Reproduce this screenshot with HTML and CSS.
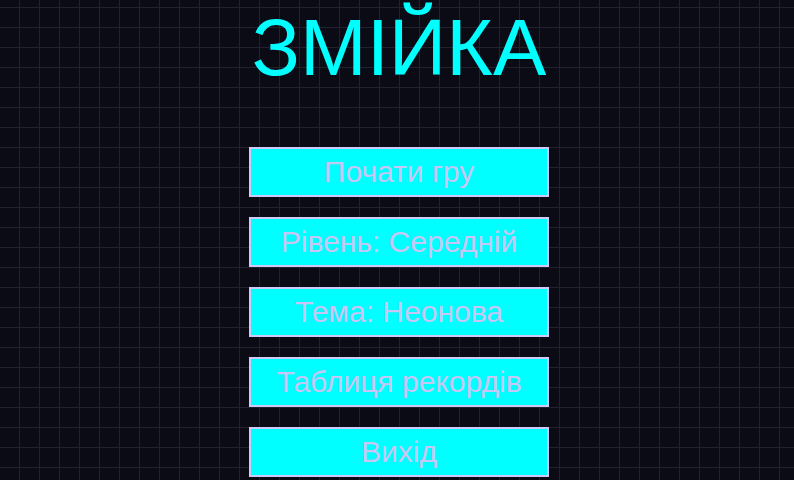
FILE: index.html
```html
<!DOCTYPE html>
<html lang="uk">
<head>
<meta charset="utf-8">
<link rel="stylesheet" href="styles.css">
</head>
<body>
<main class="menu">
  <h1 class="title">ЗМІЙКА</h1>
  <div class="buttons">
    <button class="btn">Почати гру</button>
    <button class="btn">Рівень: Середній</button>
    <button class="btn">Тема: Неонова</button>
    <button class="btn">Таблиця рекордів</button>
    <button class="btn">Вихід</button>
  </div>
</main>
</body>
</html>
```
FILE: styles.css
```css
html, body {
  margin: 0;
  padding: 0;
  height: 100%;
  overflow: hidden;
}
body {
  background-color: #0b0b15;
  background-image:
    linear-gradient(to right, #22222f 1px, transparent 1px),
    linear-gradient(to bottom, #22222f 1px, transparent 1px);
  background-size: 20px 20px;
  background-position: 19px 7px;
  font-family: "Liberation Sans", Arial, sans-serif;
}
.menu {
  display: flex;
  flex-direction: column;
  align-items: center;
  padding-left: 4px;
}
.title {
  margin: 0;
  height: 147px;
  font-size: 80px;
  font-weight: 400;
  line-height: 95px;
  color: #00ffff;
}
.buttons {
  display: flex;
  flex-direction: column;
  gap: 20px;
}
.btn {
  box-sizing: border-box;
  width: 300px;
  height: 50px;
  background: #00ffff;
  border: 2px solid #cccaf6;
  color: #c8c6f4;
  font-family: "Liberation Sans", Arial, sans-serif;
  font-size: 30px;
  padding: 0;
}
```
